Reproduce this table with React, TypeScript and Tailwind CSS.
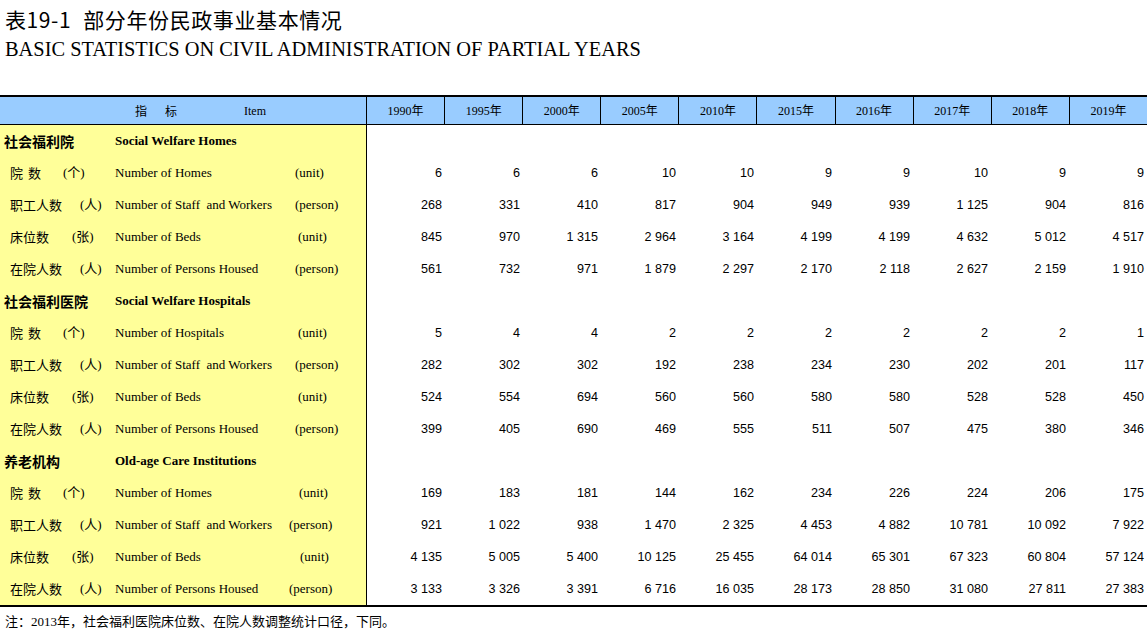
import React from 'react';

const years = ['1990', '1995', '2000', '2005', '2010', '2015', '2016', '2017', '2018', '2019'];

type Row = {
  name: React.ReactNode;
  nameW: string;
  unit: string;
  en: string;
  enW: string;
  enUnit: string;
  values: string[];
};

type Section = { cn: string; en: string; rows: Row[] };

const cjk = "font-['Noto_Sans_CJK_SC',sans-serif]";
const serif = "font-['Liberation_Serif','Noto_Sans_CJK_SC',serif]";
const sans = "font-['Liberation_Sans',sans-serif]";

const yuanShu = (
  <>
    <span>院</span>
    <span className="ml-[5px]">数</span>
  </>
);

const sections: Section[] = [
  {
    cn: '社会福利院',
    en: 'Social Welfare Homes',
    rows: [
      { name: yuanShu, nameW: 'w-[53px]', unit: '(个)', en: 'Number of Homes', enW: 'w-[180px]', enUnit: '(unit)', values: ['6', '6', '6', '10', '10', '9', '9', '10', '9', '9'] },
      { name: '职工人数', nameW: 'w-[70px]', unit: '(人)', en: 'Number of Staff\u00a0 and Workers', enW: 'w-[180px]', enUnit: '(person)', values: ['268', '331', '410', '817', '904', '949', '939', '1 125', '904', '816'] },
      { name: '床位数', nameW: 'w-[62px]', unit: '(张)', en: 'Number of Beds', enW: 'w-[183px]', enUnit: '(unit)', values: ['845', '970', '1 315', '2 964', '3 164', '4 199', '4 199', '4 632', '5 012', '4 517'] },
      { name: '在院人数', nameW: 'w-[70px]', unit: '(人)', en: 'Number of Persons Housed', enW: 'w-[180px]', enUnit: '(person)', values: ['561', '732', '971', '1 879', '2 297', '2 170', '2 118', '2 627', '2 159', '1 910'] },
    ],
  },
  {
    cn: '社会福利医院',
    en: 'Social Welfare Hospitals',
    rows: [
      { name: yuanShu, nameW: 'w-[53px]', unit: '(个)', en: 'Number of Hospitals', enW: 'w-[183px]', enUnit: '(unit)', values: ['5', '4', '4', '2', '2', '2', '2', '2', '2', '1'] },
      { name: '职工人数', nameW: 'w-[70px]', unit: '(人)', en: 'Number of Staff\u00a0 and Workers', enW: 'w-[180px]', enUnit: '(person)', values: ['282', '302', '302', '192', '238', '234', '230', '202', '201', '117'] },
      { name: '床位数', nameW: 'w-[62px]', unit: '(张)', en: 'Number of Beds', enW: 'w-[183px]', enUnit: '(unit)', values: ['524', '554', '694', '560', '560', '580', '580', '528', '528', '450'] },
      { name: '在院人数', nameW: 'w-[70px]', unit: '(人)', en: 'Number of Persons Housed', enW: 'w-[180px]', enUnit: '(person)', values: ['399', '405', '690', '469', '555', '511', '507', '475', '380', '346'] },
    ],
  },
  {
    cn: '养老机构',
    en: 'Old-age Care Institutions',
    rows: [
      { name: yuanShu, nameW: 'w-[53px]', unit: '(个)', en: 'Number of Homes', enW: 'w-[184px]', enUnit: '(unit)', values: ['169', '183', '181', '144', '162', '234', '226', '224', '206', '175'] },
      { name: '职工人数', nameW: 'w-[70px]', unit: '(人)', en: 'Number of Staff\u00a0 and Workers', enW: 'w-[174px]', enUnit: '(person)', values: ['921', '1 022', '938', '1 470', '2 325', '4 453', '4 882', '10 781', '10 092', '7 922'] },
      { name: '床位数', nameW: 'w-[62px]', unit: '(张)', en: 'Number of Beds', enW: 'w-[185px]', enUnit: '(unit)', values: ['4 135', '5 005', '5 400', '10 125', '25 455', '64 014', '65 301', '67 323', '60 804', '57 124'] },
      { name: '在院人数', nameW: 'w-[70px]', unit: '(人)', en: 'Number of Persons Housed', enW: 'w-[174px]', enUnit: '(person)', values: ['3 133', '3 326', '3 391', '6 716', '16 035', '28 173', '28 850', '31 080', '27 811', '27 383'] },
    ],
  },
];

function SectionRow({ s }: { s: Section }) {
  return (
    <div className="flex h-[32px]">
      <div className="flex w-[367px] shrink-0 items-center border-r border-black bg-[#ffff99] pl-[4px]">
        <span className={`w-[111px] shrink-0 text-[14px] font-bold ${cjk}`}>{s.cn}</span>
        <span className={`text-[13px] font-bold ${serif}`}>{s.en}</span>
      </div>
      <div className="flex-1" />
    </div>
  );
}

function DataRow({ r }: { r: Row }) {
  return (
    <div className="flex h-[32px]">
      <div className="flex w-[367px] shrink-0 items-center border-r border-black bg-[#ffff99] whitespace-nowrap">
        <div className="flex w-[115px] shrink-0 items-center pl-[10px]">
          <span className={`${r.nameW} shrink-0 text-[13px] ${cjk}`}>{r.name}</span>
          <span className={`text-[13px] ${serif}`}>{r.unit}</span>
        </div>
        <span className={`${r.enW} shrink-0 text-[13px] ${serif}`}>{r.en}</span>
        <span className={`text-[13px] ${serif}`}>{r.enUnit}</span>
      </div>
      {r.values.map((v, i) => (
        <div key={i} className={`flex flex-1 items-center justify-end pr-[3px] text-[12.6px] ${sans}`}>
          {v}
        </div>
      ))}
    </div>
  );
}

export default function App() {
  return (
    <div className="w-[1147px] h-[638px] overflow-hidden bg-white text-black">
      <div className={`pl-[5px] pt-[5px] text-[21px] leading-[28px] tracking-[0.6px] ${cjk}`}>
        表19-1<span className="ml-[12px]">部分年份民政事业基本情况</span>
      </div>
      <div className={`mt-[4px] pl-[5px] text-[20.4px] leading-[24px] font-['Liberation_Serif',serif]`}>
        BASIC STATISTICS ON CIVIL ADMINISTRATION OF PARTIAL YEARS
      </div>

      <div className="mt-[34px] border-t-2 border-b-2 border-black">
        <div className="flex h-[28px] border-b border-black bg-[#99ccff]">
          <div className="flex w-[366px] shrink-0 items-center pl-[135px] text-[12px]">
            <span className={cjk}>指</span>
            <span className={`ml-[18px] ${cjk}`}>标</span>
            <span className={`ml-[67px] ${serif}`}>Item</span>
          </div>
          {years.map((y) => (
            <div key={y} className={`flex flex-1 items-center justify-center border-l border-black text-[12px] ${serif}`}>
              {y}年
            </div>
          ))}
        </div>
        {sections.map((s) => (
          <React.Fragment key={s.cn}>
            <SectionRow s={s} />
            {s.rows.map((r, i) => (
              <DataRow key={i} r={r} />
            ))}
          </React.Fragment>
        ))}
      </div>

      <div className={`mt-[5px] pl-[5px] text-[13px] leading-[20px] ${serif}`}>
        注：2013年，社会福利医院床位数、在院人数调整统计口径，下同。
      </div>
    </div>
  );
}
